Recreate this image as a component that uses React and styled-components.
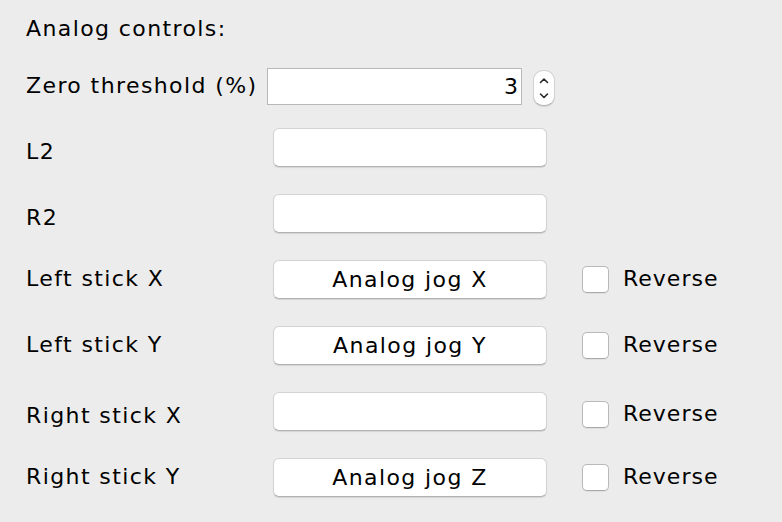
import React from "react";
import styled, { createGlobalStyle } from "styled-components";

const GlobalStyle = createGlobalStyle`
  html, body {
    margin: 0;
    padding: 0;
    background: #ececec;
  }
  body {
    font-family: "DejaVu Sans", "Liberation Sans", sans-serif;
    color: #000;
  }
`;

const Panel = styled.div`
  width: 782px;
  height: 522px;
  box-sizing: border-box;
  padding: 16px 0 0 26px;
  display: flex;
  flex-direction: column;
  background: #ececec;
  font-size: 22px;
  letter-spacing: 1.4px;
`;

const Title = styled.div`
  height: 26px;
  line-height: 26px;
`;

const Row = styled.div`
  display: flex;
  align-items: center;
  height: 40px;
`;

const ThresholdRow = styled(Row)`
  margin-top: 24px;
`;

const MappingList = styled.div`
  margin-top: 21px;
  display: flex;
  flex-direction: column;
  gap: 26px;
`;

const Label = styled.div`
  flex: none;
  width: 241px;
  line-height: 24px;
  white-space: nowrap;
  padding-top: ${(p) => (p.$drop ? 9 : 0)}px;
`;

const NumberField = styled.input`
  flex: none;
  width: 255px;
  height: 37px;
  box-sizing: border-box;
  margin: 0;
  padding: 0 3px 0 0;
  border: 1px solid #b8b8b8;
  border-radius: 0;
  background: #fff;
  font-family: "DejaVu Sans", "Liberation Sans", sans-serif;
  font-size: 22px;
  color: #000;
  text-align: right;
  outline: none;
`;

const Spinner = styled.div`
  flex: none;
  margin: 3px 0 0 11px;
  width: 22px;
  height: 36px;
  box-sizing: border-box;
  border-radius: 10px;
  background: #fff;
  border: 1px solid #d2d2d2;
  border-bottom-color: #b4b4b4;
  box-shadow: 0 1px 1px rgba(0, 0, 0, 0.12);
  display: flex;
  align-items: center;
  justify-content: center;
`;

const MapButton = styled.button`
  flex: none;
  margin: 0 0 0 6px;
  width: 274px;
  height: 39px;
  box-sizing: border-box;
  padding: 0;
  border: 1px solid #d3d3d3;
  border-bottom-color: #b2b2b2;
  border-radius: 6px;
  background: #fff;
  box-shadow: 0 1px 1px rgba(0, 0, 0, 0.1);
  font-family: "DejaVu Sans", "Liberation Sans", sans-serif;
  font-size: 22px;
  letter-spacing: 1.4px;
  color: #000;
  display: flex;
  align-items: center;
  justify-content: center;
`;

const Reverse = styled.label`
  flex: none;
  margin-left: 35px;
  display: flex;
  align-items: center;
  padding-top: ${(p) => (p.$drop ? 6 : 0)}px;
`;

const Box = styled.span`
  flex: none;
  width: 27px;
  height: 27px;
  box-sizing: border-box;
  border: 1px solid #b9b9b9;
  border-bottom-color: #a9a9a9;
  border-radius: 5px;
  background: #fff;
  box-shadow: 0 1px 1px rgba(0, 0, 0, 0.06);
`;

const BoxText = styled.span`
  margin-left: 14px;
  line-height: 24px;
  letter-spacing: 1px;
`;

const rows = [
  { label: "L2", value: "", reverse: false },
  { label: "R2", value: "", reverse: false },
  { label: "Left stick X", value: "Analog jog X", reverse: true },
  { label: "Left stick Y", value: "Analog jog Y", reverse: true },
  { label: "Right stick X", value: "", reverse: true },
  { label: "Right stick Y", value: "Analog jog Z", reverse: true },
];

function Chevrons() {
  return (
    <svg width="12" height="26" viewBox="0 0 12 26" fill="none">
      <path
        d="M2.5 7.5 L6 4 L9.5 7.5"
        stroke="#2a2a2a"
        strokeWidth="1.6"
        strokeLinecap="round"
        strokeLinejoin="round"
      />
      <path
        d="M2.5 19 L6 22.5 L9.5 19"
        stroke="#2a2a2a"
        strokeWidth="1.6"
        strokeLinecap="round"
        strokeLinejoin="round"
      />
    </svg>
  );
}

export default function App() {
  return (
    <>
      <GlobalStyle />
      <Panel>
        <Title>Analog controls:</Title>
        <ThresholdRow>
          <Label>Zero threshold (%)</Label>
          <NumberField defaultValue="3" readOnly />
          <Spinner>
            <Chevrons />
          </Spinner>
        </ThresholdRow>
        <MappingList>
          {rows.map((r) => {
            const drop = r.value === "";
            return (
              <Row key={r.label}>
                <Label $drop={drop}>{r.label}</Label>
                <MapButton type="button">{r.value}</MapButton>
                {r.reverse && (
                  <Reverse $drop={drop}>
                    <Box />
                    <BoxText>Reverse</BoxText>
                  </Reverse>
                )}
              </Row>
            );
          })}
        </MappingList>
      </Panel>
    </>
  );
}
